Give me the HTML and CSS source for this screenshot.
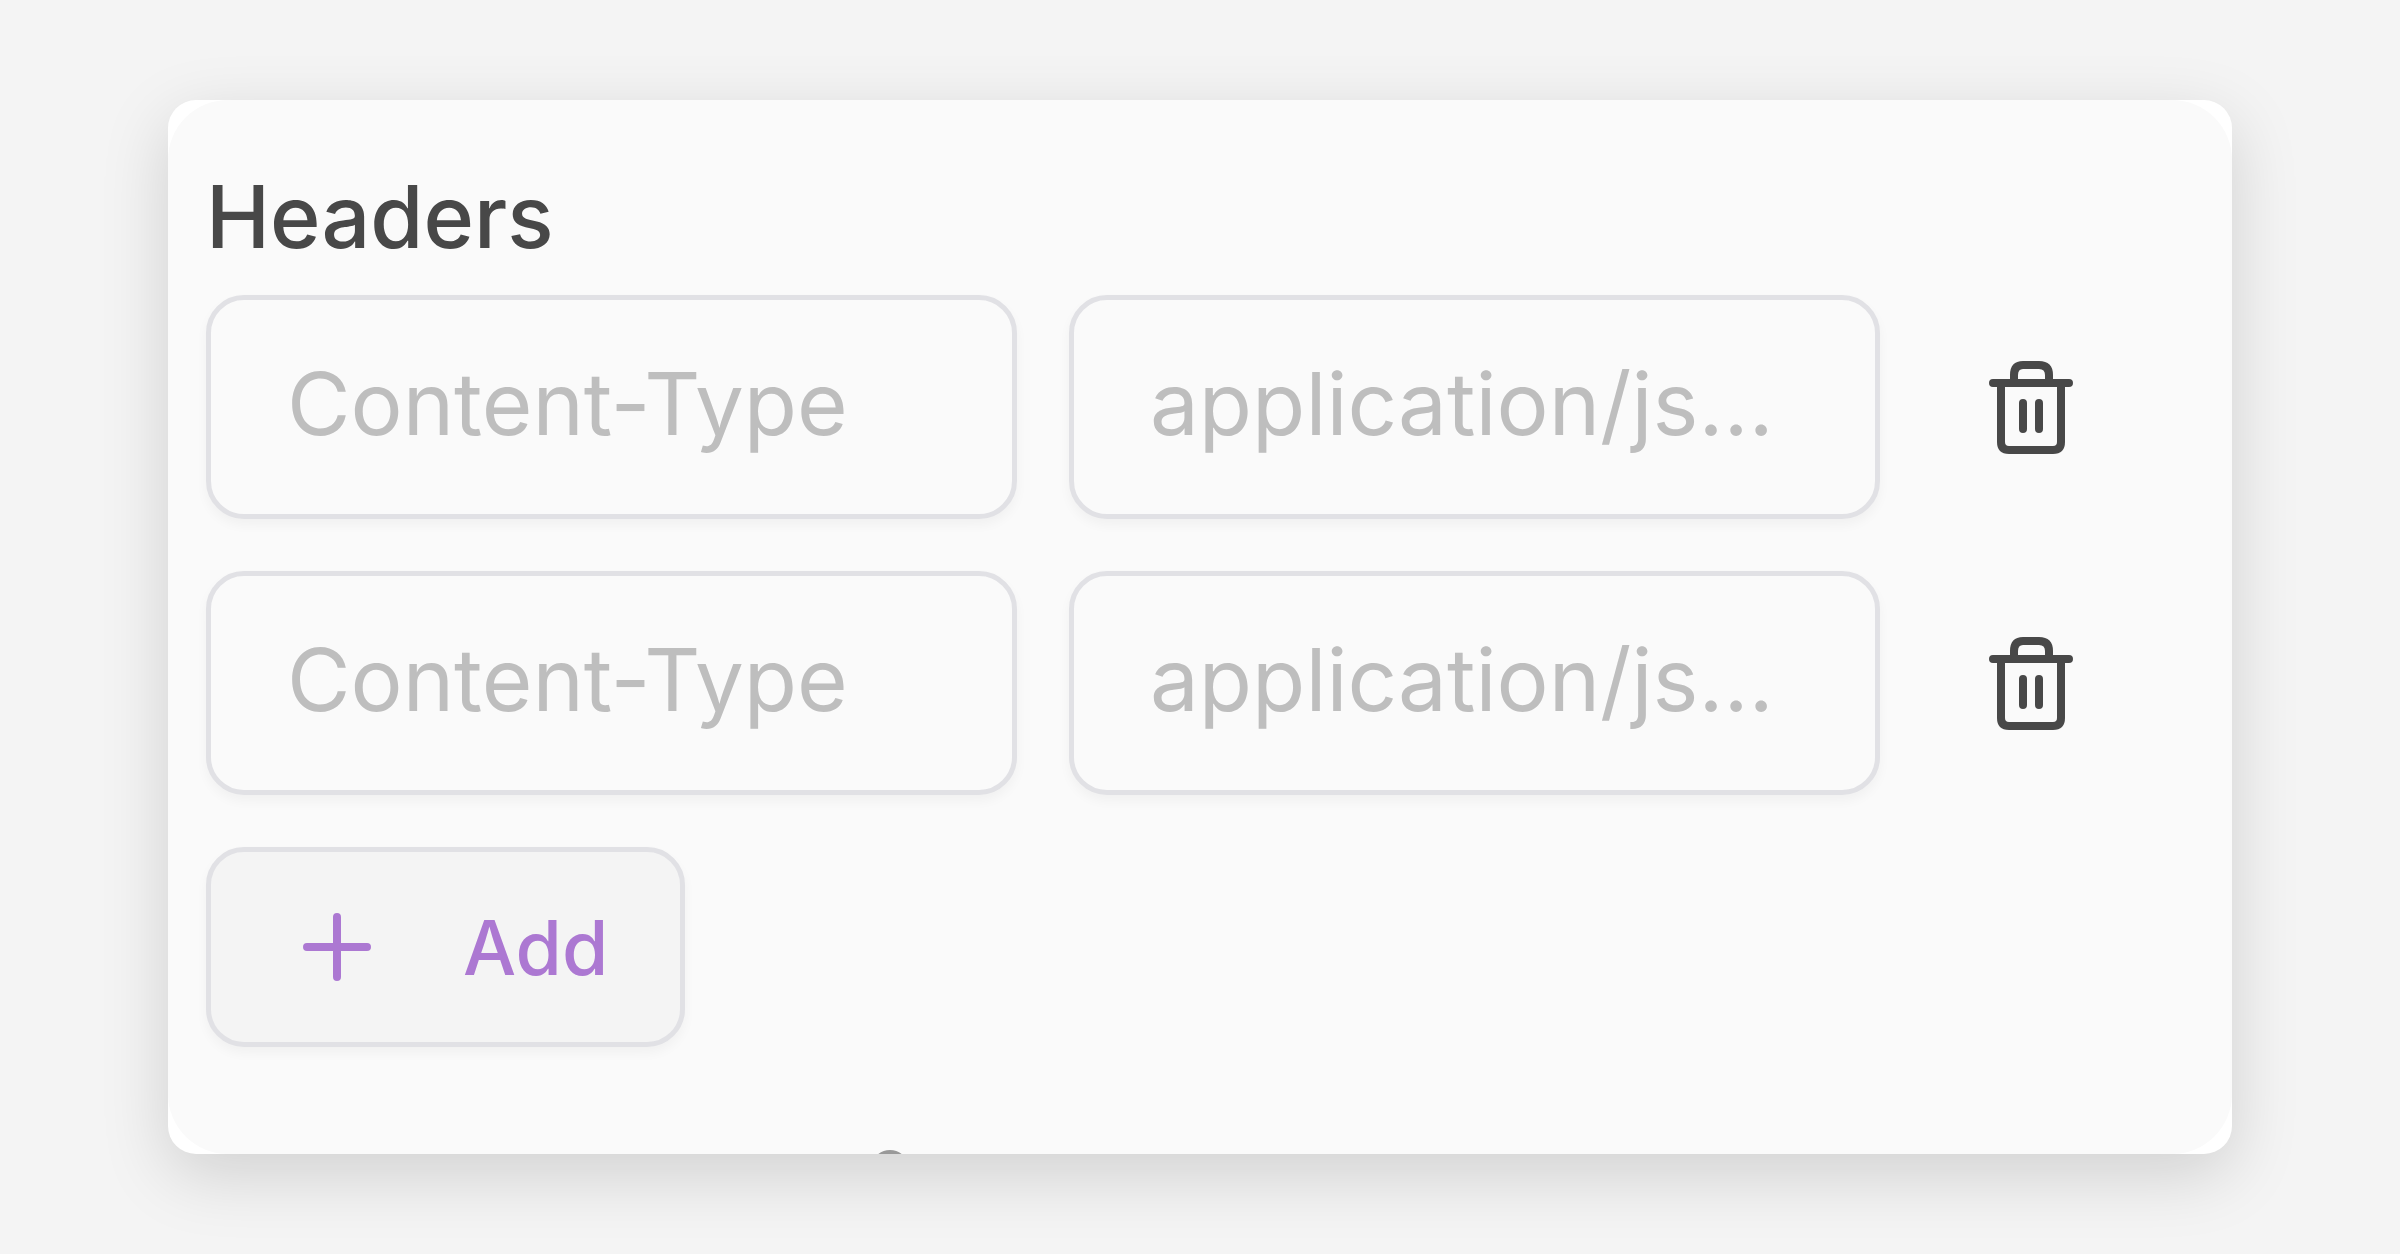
FILE: index.html
```html
<!DOCTYPE html>
<html lang="en">
<head>
    <meta charset="UTF-8">
    <meta name="viewport" content="width=device-width, initial-scale=1.0">
    <title>Headers</title>
    <link rel="stylesheet" href="styles.css">
</head>
<body>
    <main class="card">
        <form class="panel">
            <h1>Headers</h1>

            <div class="header-row">
                <input type="text" placeholder="Content-Type" aria-label="Header name">
                <input type="text" placeholder="application/json; charset" aria-label="Header value">
                <button type="button" class="delete" aria-label="Delete header">
                    <svg viewBox="0 0 84 94">
                        <path d="M4 23H80M12 24V82Q12 90 20 90H64Q72 90 72 82V24M25 20V15Q25 5 34 5H50Q60 5 60 15V20M34 43V69M50 43V69"/>
                    </svg>
                </button>
            </div>

            <div class="header-row">
                <input type="text" placeholder="Content-Type" aria-label="Header name">
                <input type="text" placeholder="application/json; charset" aria-label="Header value">
                <button type="button" class="delete" aria-label="Delete header">
                    <svg viewBox="0 0 84 94">
                        <path d="M4 23H80M12 24V82Q12 90 20 90H64Q72 90 72 82V24M25 20V15Q25 5 34 5H50Q60 5 60 15V20M34 43V69M50 43V69"/>
                    </svg>
                </button>
            </div>

            <button type="button" class="add">
                <svg viewBox="0 0 68 68">
                    <path d="M4 34H64M34 4V64"/>
                </svg>
                Add
            </button>

            <!-- top of the next section, cut off by the card -->
            <span class="next-section"></span>
        </form>
    </main>
</body>
</html>
```

FILE: styles.css
```css
* {
    box-sizing: border-box;
}

body {
    font-family: Inter, "Liberation Sans", sans-serif;
    background-color: #f4f4f4;
    color: #484848;
    margin: 0;
    padding: 100px 7%;
}

.card {
    background: white;
    border-radius: 28px;
    box-shadow: 0 20px 68px rgba(0, 0, 0, 0.15);
}

.panel {
    position: relative;
    overflow: hidden;
    display: flex;
    flex-direction: column;
    align-items: flex-start;
    gap: 52px;
    padding: 62px 38px 107px;
    background: #fafafa;
    border-radius: 60px;
}

h1 {
    margin: 0 0 -29px;
    font-size: 86px;
    font-weight: 500;
    line-height: 110px;
}

.header-row {
    display: grid;
    grid-template-columns: 1fr 1fr 198px;
    gap: 52px;
    width: 100%;
    padding-right: 64px;
}

input,
.add {
    border: 5px solid #e1e1e5;
    border-radius: 38px;
    box-shadow: 0 6px 12px rgba(0, 0, 0, 0.04);
}

input {
    width: 100%;
    height: 224px;
    padding: 0 76px 8px;
    background: #fafafa;
    color: #484848;
    font-family: inherit;
    font-size: 87px;
    text-overflow: ellipsis;
}

input::placeholder {
    color: #bebebe;
    opacity: 1;
    text-overflow: ellipsis;
}

button {
    display: flex;
    align-items: center;
    font-family: inherit;
    cursor: pointer;
}

svg {
    fill: none;
    stroke: currentColor;
    stroke-width: 8;
    stroke-linecap: round;
}

.delete {
    justify-content: center;
    padding: 0;
    border: none;
    background: none;
    color: #484848;
}

.delete svg {
    width: 84px;
}

.add {
    gap: 92px;
    height: 200px;
    padding: 0 72px 0 92px;
    background: #f4f4f4;
    color: #ac78d2;
    font-size: 75px;
    font-weight: 500;
}

.add svg {
    width: 68px;
}

.next-section {
    position: absolute;
    bottom: -34px;
    left: 703px;
    width: 38px;
    height: 38px;
    border: 5px solid #999;
    border-radius: 50%;
}
```
